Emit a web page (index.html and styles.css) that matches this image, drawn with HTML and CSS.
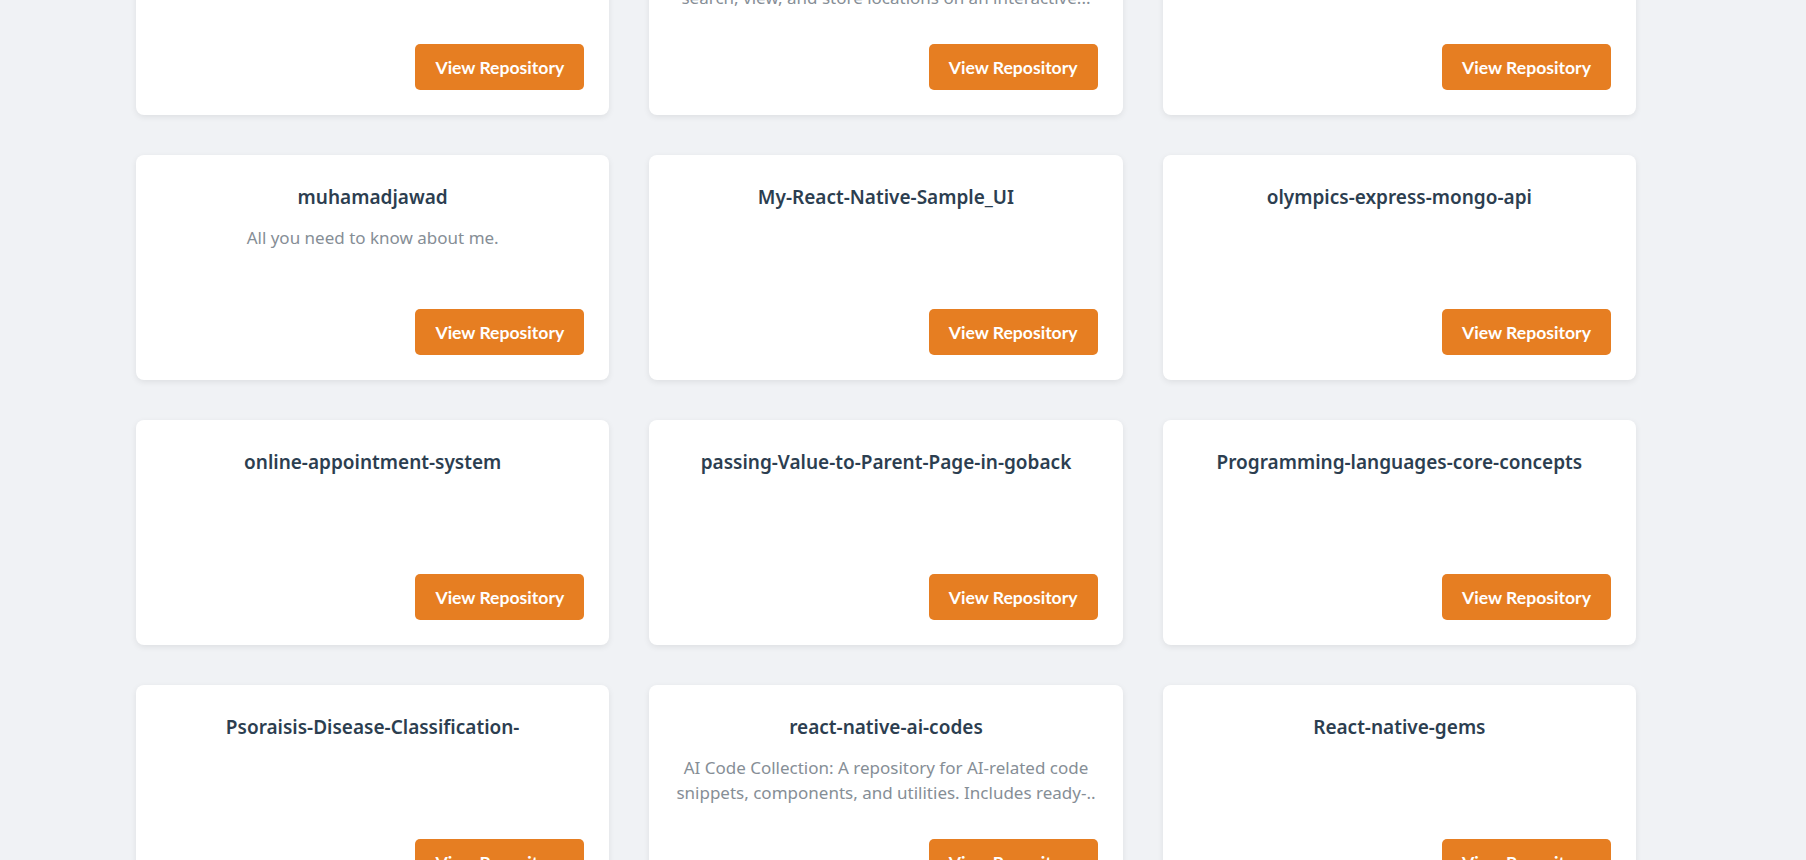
FILE: index.html
```html
<!DOCTYPE html>
<html lang="en">
<head>
<meta charset="utf-8">
<title>Repositories</title>
<link rel="stylesheet" href="styles.css">
</head>
<body>
<main class="page">
  <header class="page-header">
    <h1 class="page-title">My GitHub Repositories</h1>
  </header>
  <section class="repo-grid">
    <article class="repo-card">
      <h3 class="repo-name">meal-planner-app</h3>
      <p class="repo-desc"></p>
      <div class="repo-actions"><a class="repo-btn" href="#">View Repository</a></div>
    </article>
    <article class="repo-card">
      <h3 class="repo-name">MERN-Map-Locations</h3>
      <p class="repo-desc">A full-stack map application that lets users<br>search, view, and store locations on an interactive...</p>
      <div class="repo-actions"><a class="repo-btn" href="#">View Repository</a></div>
    </article>
    <article class="repo-card">
      <h3 class="repo-name">mobile-ui-kit</h3>
      <p class="repo-desc"></p>
      <div class="repo-actions"><a class="repo-btn" href="#">View Repository</a></div>
    </article>

    <article class="repo-card anchor">
      <h3 class="repo-name">muhamadjawad</h3>
      <p class="repo-desc">All you need to know about me.</p>
      <div class="repo-actions"><a class="repo-btn" href="#">View Repository</a></div>
    </article>
    <article class="repo-card">
      <h3 class="repo-name">My-React-Native-Sample_UI</h3>
      <p class="repo-desc"></p>
      <div class="repo-actions"><a class="repo-btn" href="#">View Repository</a></div>
    </article>
    <article class="repo-card">
      <h3 class="repo-name">olympics-express-mongo-api</h3>
      <p class="repo-desc"></p>
      <div class="repo-actions"><a class="repo-btn" href="#">View Repository</a></div>
    </article>

    <article class="repo-card">
      <h3 class="repo-name">online-appointment-system</h3>
      <p class="repo-desc"></p>
      <div class="repo-actions"><a class="repo-btn" href="#">View Repository</a></div>
    </article>
    <article class="repo-card">
      <h3 class="repo-name">passing-Value-to-Parent-Page-in-goback</h3>
      <p class="repo-desc"></p>
      <div class="repo-actions"><a class="repo-btn" href="#">View Repository</a></div>
    </article>
    <article class="repo-card">
      <h3 class="repo-name">Programming-languages-core-concepts</h3>
      <p class="repo-desc"></p>
      <div class="repo-actions"><a class="repo-btn" href="#">View Repository</a></div>
    </article>

    <article class="repo-card">
      <h3 class="repo-name">Psoraisis-Disease-Classification-</h3>
      <p class="repo-desc"></p>
      <div class="repo-actions"><a class="repo-btn" href="#">View Repository</a></div>
    </article>
    <article class="repo-card">
      <h3 class="repo-name">react-native-ai-codes</h3>
      <p class="repo-desc">AI Code Collection: A repository for AI-related code<br>snippets, components, and utilities. Includes ready-..</p>
      <div class="repo-actions"><a class="repo-btn" href="#">View Repository</a></div>
    </article>
    <article class="repo-card">
      <h3 class="repo-name">React-native-gems</h3>
      <p class="repo-desc"></p>
      <div class="repo-actions"><a class="repo-btn" href="#">View Repository</a></div>
    </article>
  </section>
</main>
<script src="script.js"></script>
</body>
</html>
```

FILE: styles.css
```css
html, body {
  margin: 0;
  padding: 0;
  background: #f0f2f5;
}

body {
  font-family: "Noto Sans", "Open Sans", sans-serif;
  color: #2c3e50;
}

.page {
  padding: 40px 170px 80px 136px;
}

.page-header {
  padding: 20px 0 40px;
  text-align: center;
}

.page-title {
  margin: 0;
  font-size: 32px;
  font-weight: 600;
  color: #2c3e50;
}

.repo-grid {
  display: grid;
  grid-template-columns: repeat(3, 1fr);
  column-gap: 40px;
  row-gap: 40px;
}

.repo-card {
  box-sizing: border-box;
  height: 225px;
  background: #ffffff;
  border-radius: 8px;
  box-shadow: 0 2px 6px rgba(0, 0, 0, 0.08);
  padding: 30px 25px 25px;
  display: flex;
  flex-direction: column;
  text-align: center;
}

.repo-name {
  margin: 0 0 16px;
  font-size: 19px;
  line-height: 24px;
  font-weight: 600;
  color: #2c3e50;
}

.repo-desc {
  margin: 0;
  font-size: 17px;
  line-height: 25px;
  color: #868e96;
}

.repo-actions {
  margin-top: auto;
  display: flex;
  justify-content: flex-end;
}

.repo-btn {
  box-sizing: border-box;
  height: 46px;
  width: 169px;
  display: flex;
  align-items: center;
  justify-content: center;
  background: #e67e22;
  color: #ffffff;
  border-radius: 5px;
  text-decoration: none;
  font-family: "Lato", "Liberation Sans", sans-serif;
  font-weight: 700;
  font-size: 17.6px;
}
```

FILE: script.js
```js
(function () {
  function place() {
    var card = document.querySelector('.repo-card.anchor');
    if (!card) return;
    var top = card.getBoundingClientRect().top + window.scrollY;
    window.scrollTo(0, top - 155);
  }
  place();
  window.addEventListener('load', place);
})();
```
